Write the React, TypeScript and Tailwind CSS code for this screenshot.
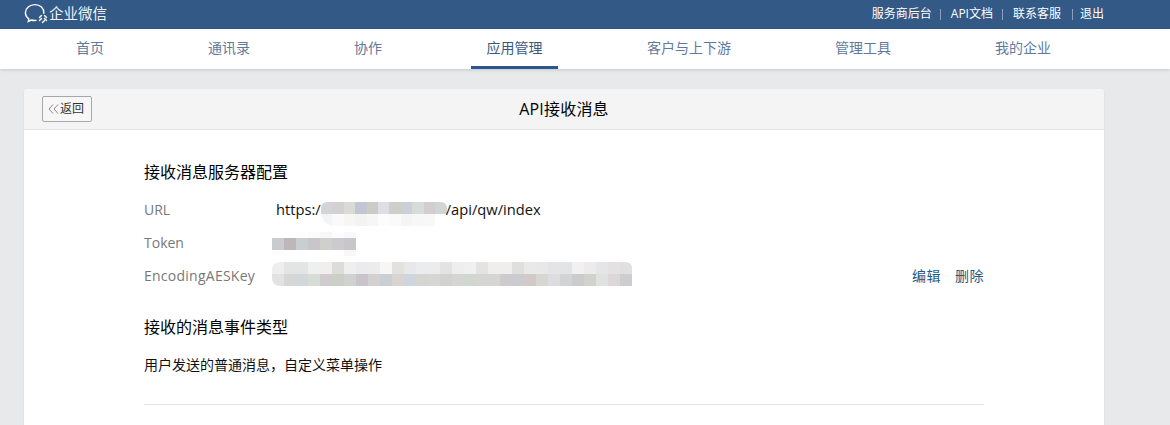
const font = "font-['Open_Sans','Noto_Sans_CJK_SC',sans-serif]";

const navItems = ["首页", "通讯录", "协作", "应用管理", "客户与上下游", "管理工具", "我的企业"];
const topLinks = [
  {label: "服务商后台", sep: ""},
  {label: "API文档", sep: "ml-2 mr-2.5"},
  {label: "联系客服", sep: "ml-[9px] mr-2.5"},
  {label: "退出", sep: "ml-[11px] mr-[7px]"},
];

const urlCells = [
  {h: 12, cells: ["#d4d4d6", "#d3d1d1", "#dbdad7", "#c2c5d2", "#cccbc6", "#dddfe4", "#cfcec9", "#c9d0d8", "#d9dbd9", "#d3cdd2", "#d0d6d4"]},
  {h: 12, cells: ["#f3f4f4", "#fafafa", "#f6f6f4", "#f3f4f2", "#f6f6f6", "#fcfcfc", "#fafafa", "#f5f5f5", "#f7f7f7", "#f8f8f8", "#ffffff"]},
];

const tokenCells = [
  {h: 6, cells: ["#ffffff", "#ffffff", "#fdfdfd", "#fcfcfc", "#f7f7f7", "#fdfdfd", "#f9f9f9"]},
  {h: 12, cells: ["#c9cbce", "#bdb7b7", "#c8ced1", "#c8c5cb", "#cfd0c9", "#cbcacf", "#c8c6c9"]},
  {h: 6, cells: ["#fdfdfd", "#fdfdfd", "#ffffff", "#ffffff", "#ffffff", "#ffffff", "#f8f8f8"]},
];

const keyCells = [
  {
    h: 12,
    cells: [
      "#eeeeee", "#e4e4e4", "#e2e5e4", "#eef0ef", "#f0eeee", "#dcdcd8", "#eef0f0", "#ebebed", "#ececec", "#f6f6f6",
      "#e3e0de", "#e7e8ec", "#ebeced", "#ececec", "#e3e3e1", "#eeeeee", "#eef1f0", "#e4e3e1", "#eeeeee", "#efeeec",
      "#dfe0dd", "#e9e9ea", "#e8e8e6", "#e4e4e6", "#e3e4e6", "#f1f1f3", "#edecea", "#e4e5e6", "#e4e1e3", "#e0e0e1",
    ],
  },
  {
    h: 12,
    cells: [
      "#e2e2e2", "#d6d6d6", "#d2d8d9", "#d6dcd6", "#d0cccd", "#cbcfc8", "#d1d1d1", "#c9c4c9", "#d3d0d2", "#c9cfd3",
      "#d8d5d0", "#cfd5dd", "#d5d6d3", "#d6d6d3", "#d2d3d0", "#d5d6d4", "#d1d6d1", "#d5d5d3", "#d5d5d4", "#cdcbce",
      "#cccbcf", "#d0cbca", "#d6d6d2", "#dddce0", "#d2d3d3", "#cccccf", "#d1d2ce", "#dfe2e1", "#dcd8da", "#cdcdcf",
    ],
  },
];

function Mosaic({rows, className}: {rows: {h: number; cells: string[]}[]; className: string}) {
  return (
    <div className={`flex flex-col shrink-0 overflow-hidden ${className}`}>
      {rows.map((row, i) => (
        <div key={i} className="flex">
          {row.cells.map((color, j) => (
            <div key={j} className="w-3" style={{backgroundColor: color, height: row.h}} />
          ))}
        </div>
      ))}
    </div>
  );
}

function Logo() {
  return (
    <svg width="26" height="22" viewBox="0 0 26 22" fill="none" stroke="#fff" strokeWidth="1.4">
      <path d="M19.8 10.2C20.2 5.4 16.2 1.6 11 1.6 5.6 1.6 1.4 5.2 1.4 9.8c0 2.600 1.300 4.600 3.400 6.100l-.5 2.600 3-1.500c1 .3 2.100.5 3.300.5.500 0 1 0 1.500-.1" strokeLinecap="round" />
      <path d="M15.500 17.500l2-2M20.500 15.500l2 2M22.500 14.500l-2-2M17.500 12.500l-2 2M18.500 19.500l2-2" strokeLinecap="round" />
    </svg>
  );
}

export default function App() {
  return (
    <div className={`${font} w-[1170px] h-[425px] overflow-hidden bg-[#e8e9eb] text-sm`}>
      <header className="h-[29px] bg-[#335986] flex items-center justify-between pl-6 pr-[66px] pb-px">
        <div className="flex items-center -space-x-px text-[#f0f3f6]">
          <Logo />
          <span className="text-[14.5px]">企业微信</span>
        </div>
        <div className="flex items-center text-xs text-white">
          {topLinks.map((link, i) => (
            <span key={link.label} className="flex items-center">
              {i > 0 && <span className={`w-px h-[11px] bg-[#8ba0ba] ${link.sep}`} />}
              {link.label}
            </span>
          ))}
        </div>
      </header>

      <nav className="h-10 bg-white flex gap-[74px] pl-[61px] shadow-[0_1px_3px_rgba(0,0,0,0.15)]">
        {navItems.map((item, i) => (
          <a
            key={item}
            className={`h-10 flex items-center text-sm border-b-[3px] ${
              i === 3 ? "px-[15.5px] border-[#2c5691] text-[#37587f]" : "px-[15px] border-transparent text-[#5f7a9c]"
            }`}
          >
            {item}
          </a>
        ))}
      </nav>

      <main className="w-[1080px] ml-6 mt-5 bg-white rounded-t-[4px] shadow-[0_1px_2px_rgba(0,0,0,0.08)]">
        <div className="relative h-[41px] bg-[#f4f4f4] border-b border-[#e4e4e6] rounded-t-[4px] flex items-center justify-center text-black">
          <button className="absolute left-[18px] top-[7px] w-[50px] h-[26px] border border-[#a8a8a8] rounded-[2px] bg-[#f7f7f7] flex items-center pl-[5px] gap-px text-xs text-[#333]">
            <svg width="11" height="10" viewBox="0 0 11 10" fill="none" stroke="#888" strokeWidth="1">
              <path d="M5 .5L1 5l4 4.500M10 .5L6 5l4 4.500" />
            </svg>
            返回
          </button>
          <span className="text-base tracking-[0.2px]">API接收消息</span>
        </div>

        <div className="px-[120px] pt-8 h-[300px]">
          <h2 className="text-base leading-5 text-black">接收消息服务器配置</h2>

          <div className="mt-[11px] flex flex-col">
            <div className="flex items-center h-[33px]">
              <span className="w-[132px] text-[#787878]">URL</span>
              <span className="text-[14.7px] text-[#111]">https:/</span>
              <Mosaic rows={urlCells} className="w-[126px] mt-2 rounded-b-[14px] rounded-t-[6px]" />
              <span className="-ml-px text-[14.7px] text-[#111]">/api/qw/index</span>
            </div>
            <div className="flex items-center h-[33px]">
              <span className="w-[128px] text-[#787878]">Token</span>
              <Mosaic rows={tokenCells} className="w-[84px] mt-0.5" />
            </div>
            <div className="flex items-center h-[33px]">
              <span className="w-[128px] text-[#787878] tracking-[0.25px]">EncodingAESKey</span>
              <Mosaic rows={keyCells} className="w-[360px] mb-1 rounded-l-[8px] rounded-tr-[6px]" />
              <span className="ml-auto flex gap-3.5 text-sm tracking-[0.5px] text-[#1d5a85]">
                <a>编辑</a>
                <a>删除</a>
              </span>
            </div>
          </div>

          <h2 className="mt-[25px] text-base leading-5 text-black">接收的消息事件类型</h2>
          <p className="mt-[18px] text-sm leading-5 text-[#111]">用户发送的普通消息，自定义菜单操作</p>
          <div className="mt-[29px] border-t border-[#e4e4e6]" />
        </div>
      </main>
    </div>
  );
}
